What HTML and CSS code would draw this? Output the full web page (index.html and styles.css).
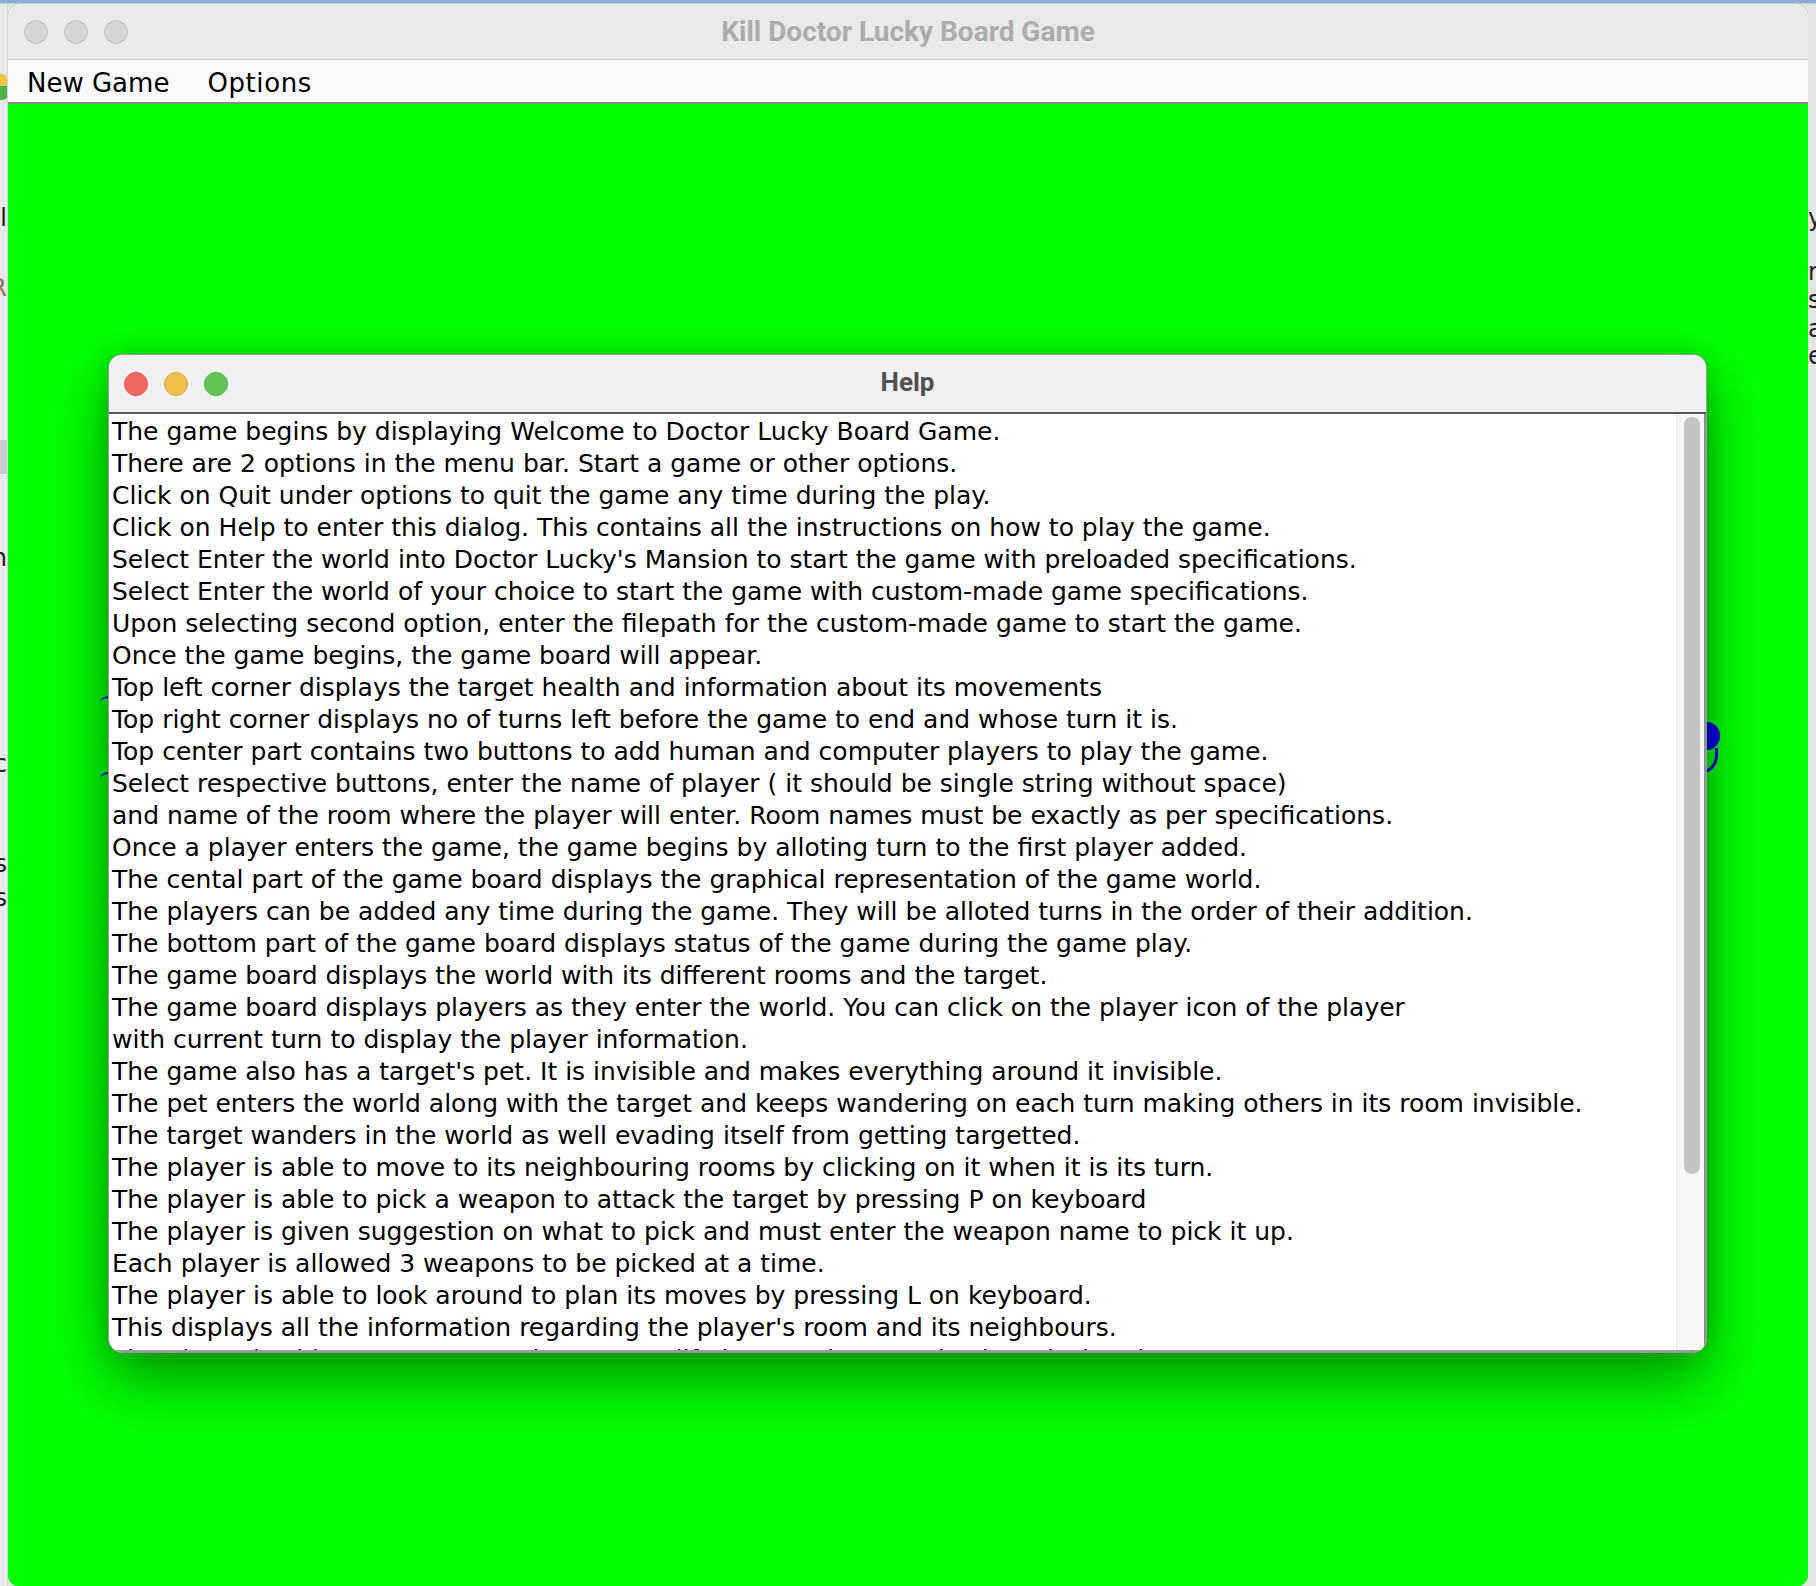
FILE: index.html
```html
<!DOCTYPE html>
<html>
<head>
<meta charset="utf-8">
<title>Kill Doctor Lucky Board Game</title>
<link rel="stylesheet" href="styles.css">
</head>
<body>
<div class="desktop">
  <div class="topstrip"></div>
  <div class="row">
    <div class="sidestrip left">
      <span class="appicon"></span>
      <span class="frag f1">il</span>
      <span class="frag f2">R</span>
      <span class="gblock"></span>
      <span class="frag f3">n</span>
      <span class="frag f4">c</span>
      <span class="frag f5">s</span>
      <span class="frag f6">s</span>
    </div>
    <div class="window">
      <div class="titlebar">
        <div class="lights">
          <span class="light gray"></span>
          <span class="light gray"></span>
          <span class="light gray"></span>
        </div>
        <div class="wtitle">Kill Doctor Lucky Board Game</div>
      </div>
      <div class="menubar">
        <span class="menuitem">New Game</span>
        <span class="menuitem">Options</span>
      </div>
      <div class="board">
        <span class="mark mleft1"></span>
        <span class="mark mleft2"></span>
        <span class="mark mright"></span>
        <span class="mark mright2"></span>
        <div class="dialog">
          <div class="dtitlebar">
            <div class="lights">
              <span class="light red"></span>
              <span class="light yellow"></span>
              <span class="light green"></span>
            </div>
            <div class="dtitle">Help</div>
          </div>
          <div class="dbody">
            <div class="textarea">
              <div>The game begins by displaying Welcome to Doctor Lucky Board Game.</div>
              <div>There are 2 options in the menu bar. Start a game or other options.</div>
              <div>Click on Quit under options to quit the game any time during the play.</div>
              <div>Click on Help to enter this dialog. This contains all the instructions on how to play the game.</div>
              <div>Select Enter the world into Doctor Lucky's Mansion to start the game with preloaded specifications.</div>
              <div>Select Enter the world of your choice to start the game with custom-made game specifications.</div>
              <div>Upon selecting second option, enter the filepath for the custom-made game to start the game.</div>
              <div>Once the game begins, the game board will appear.</div>
              <div>Top left corner displays the target health and information about its movements</div>
              <div>Top right corner displays no of turns left before the game to end and whose turn it is.</div>
              <div>Top center part contains two buttons to add human and computer players to play the game.</div>
              <div>Select respective buttons, enter the name of player ( it should be single string without space)</div>
              <div>and name of the room where the player will enter. Room names must be exactly as per specifications.</div>
              <div>Once a player enters the game, the game begins by alloting turn to the first player added.</div>
              <div>The cental part of the game board displays the graphical representation of the game world.</div>
              <div>The players can be added any time during the game. They will be alloted turns in the order of their addition.</div>
              <div>The bottom part of the game board displays status of the game during the game play.</div>
              <div>The game board displays the world with its different rooms and the target.</div>
              <div>The game board displays players as they enter the world. You can click on the player icon of the player</div>
              <div>with current turn to display the player information.</div>
              <div>The game also has a target's pet. It is invisible and makes everything around it invisible.</div>
              <div>The pet enters the world along with the target and keeps wandering on each turn making others in its room invisible.</div>
              <div>The target wanders in the world as well evading itself from getting targetted.</div>
              <div>The player is able to move to its neighbouring rooms by clicking on it when it is its turn.</div>
              <div>The player is able to pick a weapon to attack the target by pressing P on keyboard</div>
              <div>The player is given suggestion on what to pick and must enter the weapon name to pick it up.</div>
              <div>Each player is allowed 3 weapons to be picked at a time.</div>
              <div>The player is able to look around to plan its moves by pressing L on keyboard.</div>
              <div>This displays all the information regarding the player's room and its neighbours.</div>
              <div>The player is able to attempt on the target's life by pressing A on keyboard when in same room.</div>
              <div>The player with the weapon of highest damage is chosen automatically if no weapon is selected.</div>
            </div>
            <div class="scrollbar">
              <div class="thumb"></div>
            </div>
          </div>
        </div>
      </div>
    </div>
    <div class="sidestrip right">
      <span class="frag r1">y</span>
      <span class="frag r2">r</span>
      <span class="frag r3">s</span>
      <span class="frag r4">a</span>
      <span class="frag r5">e</span>
    </div>
  </div>
</div>
</body>
</html>
```

FILE: styles.css
```css
* { box-sizing: border-box; }
html, body { margin: 0; padding: 0; }
body {
  width: 1816px;
  height: 1586px;
  overflow: hidden;
  background: #e6e6e6;
  font-family: "DejaVu Sans", "Liberation Sans", sans-serif;
}
.desktop { width: 1816px; height: 1586px; display: flex; flex-direction: column; }
.topstrip { height: 4px; background: #8eabd6; border-bottom: 1px solid #b9c6d8; }
.row { display: flex; flex: 1; height: 1582px; }

.sidestrip {
  width: 8px;
  position: relative;
  overflow: hidden;
  background: #e9e9e9;
}
.sidestrip.left { border-right: 1px solid #d6d6d6; }
.sidestrip.right { background: #e4e4e4; }
.appicon {
  position: absolute;
  left: -6px;
  top: 70px;
  width: 14px;
  height: 26px;
  border-radius: 6px;
  background: linear-gradient(#f3c24a 0 45%, #4caf50 45% 100%);
}
.frag {
  position: absolute;
  font-size: 24px;
  color: #222;
  line-height: 1;
}
.left .frag { right: 0; }
.f1 { top: 202px; right: 0; }
.f2 { top: 272px; color: #8a7a5a; }
.f3 { top: 542px; }
.f4 { top: 748px; }
.f5 { top: 848px; }
.f6 { top: 882px; }
.gblock { position: absolute; left: 0; top: 436px; width: 8px; height: 34px; background: #c9c9c9; }
.right .frag { left: 0; }
.r1 { top: 202px; }
.r2 { top: 256px; }
.r3 { top: 284px; }
.r4 { top: 313px; }
.r5 { top: 340px; }

.window {
  width: 1800px;
  display: flex;
  flex-direction: column;
  border-radius: 11px;
  overflow: hidden;
  background: #00ff00;
}
.titlebar {
  height: 56px;
  background: #e8e9e9;
  border-bottom: 1px solid #cfcfcf;
  position: relative;
  display: flex;
  align-items: center;
  justify-content: center;
}
.lights {
  position: absolute;
  left: 16px;
  top: 0;
  bottom: 0;
  display: flex;
  align-items: center;
  gap: 16px;
}
.light {
  width: 24px;
  height: 24px;
  border-radius: 50%;
  display: block;
}
.light.gray { background: #d5d5d5; border: 1px solid #c4c4c4; }
.wtitle {
  font-family: Roboto, "Liberation Sans", sans-serif;
  font-weight: 700;
  font-size: 28px;
  color: #acacac;
}
.menubar {
  height: 44px;
  background: #fafafa;
  border-bottom: 2px solid #8a8a8a;
  display: flex;
  align-items: center;
  padding-left: 19px;
  gap: 38px;
}
.menuitem {
  font-size: 26px;
  color: #000;
  padding-top: 4px;
}
.menuitem + .menuitem { letter-spacing: 0.6px; }
.board {
  flex: 1;
  position: relative;
  background: #00ff00;
}
.mark { position: absolute; }
.mleft1 { left: 92px; top: 592px; width: 14px; height: 12px; border-top: 2px solid #1a1aff; border-radius: 60% 0 0 0; }
.mleft2 { left: 92px; top: 668px; width: 14px; height: 12px; border-top: 2px solid #1a1aff; border-radius: 60% 0 0 0; }
.mright { left: 1686px; top: 618px; width: 26px; height: 28px; background: #0000e6; border-radius: 50%; }
.mright2 { left: 1684px; top: 644px; width: 26px; height: 26px; border-bottom: 3px solid #0000e6; border-right: 3px solid #0000e6; border-radius: 0 0 70% 0; }

.dialog {
  position: absolute;
  left: 100px;
  top: 250px;
  width: 1599px;
  height: 999px;
  border-radius: 14px;
  overflow: hidden;
  background: #ffffff;
  border: 1px solid #9a9a9a;
  box-shadow: 0 26px 60px rgba(0, 0, 0, 0.42), 0 0 20px rgba(0, 0, 0, 0.14);
  display: flex;
  flex-direction: column;
}
.dtitlebar {
  height: 59px;
  flex: none;
  background: #eff0f0;
  border-bottom: 2px solid #585858;
  position: relative;
  display: flex;
  align-items: center;
  justify-content: center;
}
.dialog .lights { left: 15px; }
.light.red { background: #ee6a5f; border: 1px solid #d9584d; }
.light.yellow { background: #f5bf4f; border: 1px solid #dea93f; }
.light.green { background: #62c554; border: 1px solid #52b044; }
.dtitle {
  font-family: Roboto, "Liberation Sans", sans-serif;
  font-weight: 700;
  font-size: 26px;
  color: #4f4f4f;
  padding-bottom: 3px;
}
.dbody {
  flex: 1;
  display: flex;
  min-height: 0;
  border-bottom: 2px solid #9c9c9c;
}
.textarea {
  flex: 1;
  overflow: hidden;
  padding: 2px 0 0 3px;
  font-family: "DejaVu Sans", "Liberation Sans", sans-serif;
  font-size: 25px;
  line-height: 32px;
  color: #000;
  white-space: nowrap;
}
.scrollbar {
  width: 30px;
  flex: none;
  background: #f7f7f7;
  border-left: 1px solid #e6e6e6;
  border-right: 2px solid #8e8e8e;
  padding: 3px 5px 0 7px;
}
.thumb {
  width: 16px;
  height: 757px;
  background: #c2c2c2;
  border-radius: 8px;
}
```
